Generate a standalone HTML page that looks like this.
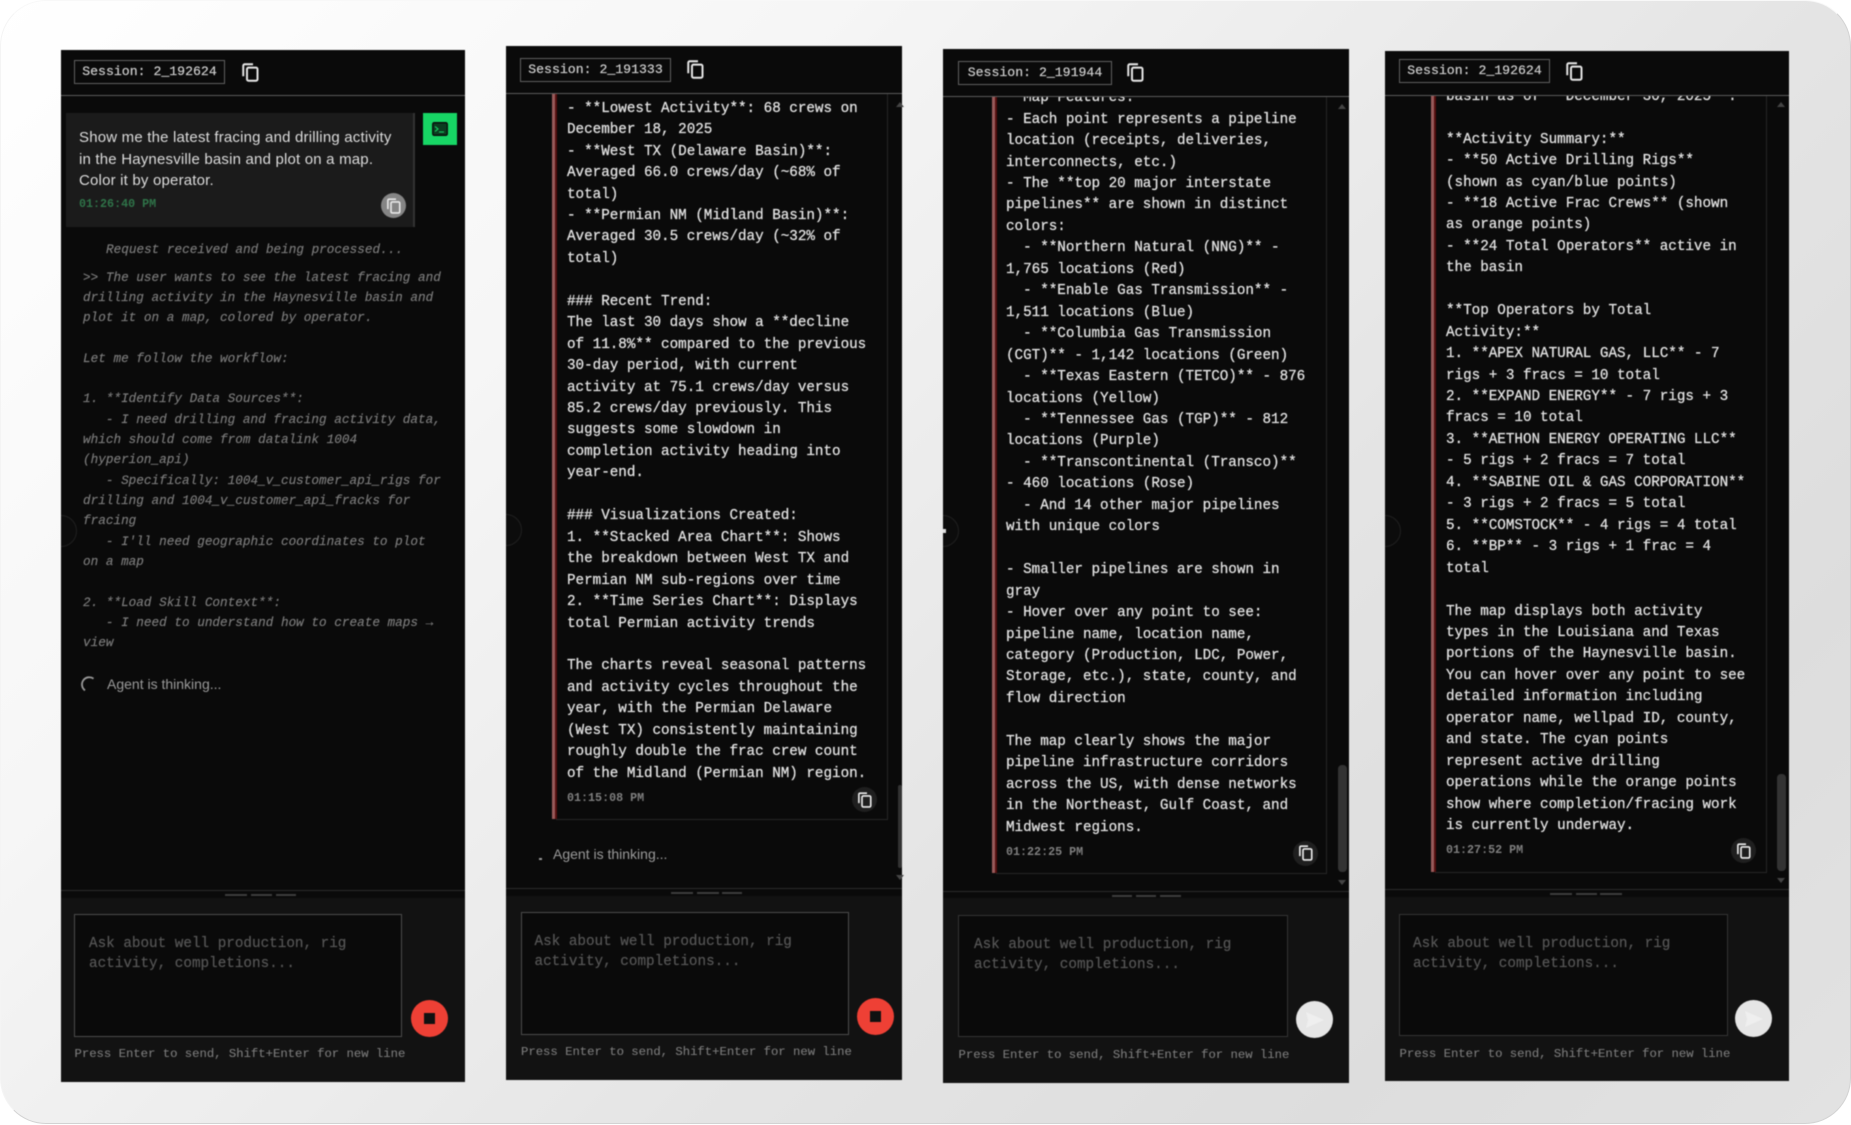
<!DOCTYPE html>
<html><head><meta charset="utf-8"><title>Sessions</title>
<style>
html,body{margin:0;padding:0;width:1851px;height:1125px;overflow:hidden;background:#fff}
*{box-sizing:border-box}
.card{position:absolute;left:0;top:0;width:1851px;height:1124px;border-radius:46px;background:linear-gradient(135deg,#fff 0%,#f6f6f6 28%,#e4e4e4 62%,#dddddd 82%,#e2e2e2 100%);border:1px solid #d2d2d2;border-top-color:#f8f8f8;border-left-color:#f4f4f4}
.a{position:absolute}
.wrap{position:absolute;left:0;top:0;width:1851px;height:1125px;filter:blur(.4px)}
.panel{position:absolute;background:#0a0a0a;overflow:hidden}
.foot{position:absolute;background:#121212}
.hdr{position:absolute;background:#0a0a0a;border-bottom:1px solid #5a5a5a}
.sess{position:absolute;height:24px;border:1px solid #5f5f5f;font:13.2px/22px "Liberation Mono",monospace;color:#cfcfcf;text-align:center;white-space:pre;background:#0a0a0a;-webkit-text-stroke:.2px #cfcfcf}
pre{margin:0;position:absolute;font-family:"Liberation Mono",monospace;white-space:pre}
.msg{font-size:14.3px;line-height:21.46px;color:#e2e2e2;letter-spacing:-.03px;-webkit-text-stroke:.25px #e2e2e2}
.think{font-size:12.7px;line-height:20.32px;color:#7c7c7c;font-style:italic;-webkit-text-stroke:.15px #7c7c7c}
.time{position:absolute;font:bold 11.7px/14px "Liberation Mono",monospace;color:#7f7f7f;white-space:pre}
.agent{position:absolute;font:14px/18px "Liberation Sans",sans-serif;color:#9a9a9a;white-space:pre}
.ta{position:absolute;background:#0a0a0a;border:1px solid #4c4c4c}
.ta.dim{border-color:#333}
.ph{font-size:14.3px;line-height:20px;color:#565656;-webkit-text-stroke:.2px #565656}
.hint{position:absolute;font:12.25px/16px "Liberation Mono",monospace;color:#7a7a7a;white-space:pre;-webkit-text-stroke:.12px #7a7a7a}
.dash{position:absolute;height:2px;background:#3c3c3c}
.div{position:absolute;height:1px;background:#2a2a2a}
.box{position:absolute;border:1px solid #262626;border-left:0;border-top:0}
.red{position:absolute;width:4.5px;background:linear-gradient(90deg,#985a5a 0,#985a5a 60%,#560e0e 60%,#560e0e 100%)}
.cbtn{position:absolute;width:25px;height:25px;border-radius:50%;background:#1f1f1f}
.stop{position:absolute;width:37px;height:37px;border-radius:50%;background:#ee4035}
.stop i{position:absolute;left:13px;top:13px;width:11px;height:11px;background:#111;display:block}
.send{position:absolute;width:37px;height:37px;border-radius:50%;background:#e6e6e6}
.thumb{position:absolute;background:#333;border-radius:4px}
.up{position:absolute;width:0;height:0;border-left:4px solid transparent;border-right:4px solid transparent;border-bottom:5px solid #444}
.dn{position:absolute;width:0;height:0;border-left:4px solid transparent;border-right:4px solid transparent;border-top:5px solid #444}
.tog{position:absolute;width:32px;height:32px;border-radius:50%;border:1px solid #202020;background:#0c0c0c;clip-path:inset(0 0 0 16px)}
</style></head><body>
<svg width="0" height="0" style="position:absolute"><defs>
<symbol id="cp" viewBox="0 0 24 25"><path d="M3 17.5V3.5A2 2 0 0 1 5 1.5H16" fill="none" stroke="currentColor" stroke-width="2.6"/><rect x="8" y="6" width="14" height="17.5" rx="2" fill="none" stroke="currentColor" stroke-width="2.6"/></symbol>
</defs></svg>
<div class="card"></div>
<div class="wrap">

<!-- PANEL 1 -->
<div class="panel" style="left:61px;top:50px;width:404px;height:1032px"></div>
<div class="tog" style="left:45px;top:515px"></div>
<div class="hdr" style="left:61px;top:50px;width:404px;height:46px"></div>
<div class="sess" style="left:74px;top:60px;width:151px">Session: 2_192624</div>
<svg class="a" style="left:241px;top:63px;color:#e8e8e8" width="18" height="19"><use href="#cp"/></svg>
<div class="a" style="left:66px;top:113px;width:349px;height:114px;background:#1b1b1b;border-right:2px solid #333"></div>
<div class="a" style="left:79px;top:127px;font:15px/21.5px 'Liberation Sans',sans-serif;letter-spacing:.19px;color:#dcdcdc;white-space:pre">Show me the latest fracing and drilling activity
in the Haynesville basin and plot on a map.
Color it by operator.</div>
<div class="time" style="left:79px;top:197px;color:#2f7449">01:26:40 PM</div>
<div class="a" style="left:381px;top:193px;width:25px;height:25px;border-radius:50%;background:#858585"></div>
<svg class="a" style="left:385.5px;top:197.5px;color:#e8e8e8" width="15" height="16"><use href="#cp"/></svg>
<div class="a" style="left:423px;top:113px;width:34px;height:32px;background:#17d665"></div>
<svg class="a" style="left:432px;top:122px" width="16" height="14" viewBox="0 0 16 14"><rect x=".7" y=".7" width="14.6" height="12.6" rx="1.5" fill="#0b3d20" stroke="#0a0a0a" stroke-width="1.3"/><path d="M3 4.5L6 7L3 9.5M7 10H12" fill="none" stroke="#17d665" stroke-width="1.1"/></svg>
<pre class="think" style="left:106px;top:240px">Request received and being processed...</pre>
<pre class="think" style="left:83px;top:267.5px">&gt;&gt; The user wants to see the latest fracing and
drilling activity in the Haynesville basin and
plot it on a map, colored by operator.

Let me follow the workflow:

1. **Identify Data Sources**:
   - I need drilling and fracing activity data,
which should come from datalink 1004
(hyperion_api)
   - Specifically: 1004_v_customer_api_rigs for
drilling and 1004_v_customer_api_fracks for
fracing
   - I'll need geographic coordinates to plot
on a map

2. **Load Skill Context**:
   - I need to understand how to create maps →
view</pre>
<svg class="a" style="left:79px;top:675px" width="18" height="18" viewBox="0 0 18 18"><path d="M14.5 3.6A7 7 0 0 0 6 15.4" fill="none" stroke="#9a9a9a" stroke-width="1.8"/></svg>
<div class="agent" style="left:107px;top:675px">Agent is thinking...</div>
<div class="foot" style="left:61px;top:898px;width:404px;height:184px"></div>
<div class="div" style="left:61px;top:890px;width:404px"></div>
<div class="dash" style="left:225px;top:894px;width:22px"></div><div class="dash" style="left:251px;top:894px;width:21px"></div><div class="dash" style="left:276px;top:894px;width:20px"></div>
<div class="ta" style="left:74px;top:914px;width:328px;height:123px"></div>
<pre class="ph" style="left:89px;top:934px">Ask about well production, rig
activity, completions...</pre>
<div class="stop" style="left:411px;top:1000px"><i></i></div>
<div class="hint" style="left:74.5px;top:1046px">Press Enter to send, Shift+Enter for new line</div>

<!-- PANEL 2 -->
<div class="panel" style="left:506px;top:46px;width:396px;height:1034px"></div>
<div class="tog" style="left:490px;top:514px"></div>
<pre class="msg" style="left:567px;top:98.7px">- **Lowest Activity**: 68 crews on
December 18, 2025
- **West TX (Delaware Basin)**:
Averaged 66.0 crews/day (~68% of
total)
- **Permian NM (Midland Basin)**:
Averaged 30.5 crews/day (~32% of
total)

### Recent Trend:
The last 30 days show a **decline
of 11.8%** compared to the previous
30-day period, with current
activity at 75.1 crews/day versus
85.2 crews/day previously. This
suggests some slowdown in
completion activity heading into
year-end.

### Visualizations Created:
1. **Stacked Area Chart**: Shows
the breakdown between West TX and
Permian NM sub-regions over time
2. **Time Series Chart**: Displays
total Permian activity trends

The charts reveal seasonal patterns
and activity cycles throughout the
year, with the Permian Delaware
(West TX) consistently maintaining
roughly double the frac crew count
of the Midland (Permian NM) region.</pre>
<div class="hdr" style="left:506px;top:46px;width:396px;height:48px"></div>
<div class="sess" style="left:520px;top:58px;width:151px">Session: 2_191333</div>
<svg class="a" style="left:686px;top:60px;color:#e8e8e8" width="18" height="19"><use href="#cp"/></svg>
<div class="red" style="left:552px;top:94px;height:725px"></div>
<div class="box" style="left:556px;top:94px;width:332px;height:726px"></div>
<div class="time" style="left:567px;top:790.5px">01:15:08 PM</div>
<div class="cbtn" style="left:852px;top:787px"></div>
<svg class="a" style="left:856.5px;top:791.5px;color:#eee" width="15" height="16"><use href="#cp"/></svg>
<div class="up" style="left:896px;top:102px"></div>
<div class="thumb" style="left:898px;top:785px;width:4px;height:83px"></div>
<div class="dn" style="left:896px;top:875px"></div>
<div class="a" style="left:539px;top:858px;width:3px;height:2px;background:#999"></div>
<div class="agent" style="left:553px;top:845px">Agent is thinking...</div>
<div class="foot" style="left:506px;top:896px;width:396px;height:184px"></div>
<div class="div" style="left:506px;top:888px;width:396px"></div>
<div class="dash" style="left:671px;top:892px;width:22px"></div><div class="dash" style="left:697px;top:892px;width:22px"></div><div class="dash" style="left:722px;top:892px;width:20px"></div>
<div class="ta" style="left:521px;top:912px;width:328px;height:123px"></div>
<pre class="ph" style="left:534.5px;top:932px">Ask about well production, rig
activity, completions...</pre>
<div class="stop" style="left:856.5px;top:998px"><i></i></div>
<div class="hint" style="left:521px;top:1044px">Press Enter to send, Shift+Enter for new line</div>

<!-- PANEL 3 -->
<div class="panel" style="left:943px;top:49px;width:406px;height:1034px"></div>
<div class="tog" style="left:927px;top:515px"></div>
<div class="a" style="left:943px;top:529px;width:3px;height:4px;background:#ddd"></div>
<pre class="msg" style="left:1006px;top:88.2px">**Map Features:**
- Each point represents a pipeline
location (receipts, deliveries,
interconnects, etc.)
- The **top 20 major interstate
pipelines** are shown in distinct
colors:
  - **Northern Natural (NNG)** -
1,765 locations (Red)
  - **Enable Gas Transmission** -
1,511 locations (Blue)
  - **Columbia Gas Transmission
(CGT)** - 1,142 locations (Green)
  - **Texas Eastern (TETCO)** - 876
locations (Yellow)
  - **Tennessee Gas (TGP)** - 812
locations (Purple)
  - **Transcontinental (Transco)**
- 460 locations (Rose)
  - And 14 other major pipelines
with unique colors

- Smaller pipelines are shown in
gray
- Hover over any point to see:
pipeline name, location name,
category (Production, LDC, Power,
Storage, etc.), state, county, and
flow direction

The map clearly shows the major
pipeline infrastructure corridors
across the US, with dense networks
in the Northeast, Gulf Coast, and
Midwest regions.</pre>
<div class="hdr" style="left:943px;top:49px;width:406px;height:48px"></div>
<div class="sess" style="left:958px;top:61px;width:154px">Session: 2_191944</div>
<svg class="a" style="left:1126px;top:63px;color:#e8e8e8" width="18" height="19"><use href="#cp"/></svg>
<div class="red" style="left:992px;top:97px;height:776px"></div>
<div class="box" style="left:996px;top:97px;width:331px;height:777px"></div>
<div class="time" style="left:1006px;top:844.5px">01:22:25 PM</div>
<div class="cbtn" style="left:1293px;top:841px"></div>
<svg class="a" style="left:1297.5px;top:845px;color:#eee" width="15" height="16"><use href="#cp"/></svg>
<div class="up" style="left:1338px;top:104px"></div>
<div class="thumb" style="left:1338px;top:765px;width:9px;height:107px"></div>
<div class="dn" style="left:1338px;top:880px"></div>
<div class="foot" style="left:943px;top:898px;width:406px;height:185px"></div>
<div class="div" style="left:943px;top:891px;width:406px"></div>
<div class="dash" style="left:1112px;top:895px;width:20px"></div><div class="dash" style="left:1136px;top:895px;width:20px"></div><div class="dash" style="left:1160px;top:895px;width:21px"></div>
<div class="ta dim" style="left:958px;top:915px;width:330px;height:122px"></div>
<pre class="ph" style="left:974px;top:935px">Ask about well production, rig
activity, completions...</pre>
<div class="send" style="left:1296px;top:1001px"></div>
<svg class="a" style="left:1305px;top:1011px" width="20" height="18" viewBox="0 0 20 18"><path d="M1 1L19 9L1 17L3 9Z" fill="#efefef"/></svg>
<div class="hint" style="left:958.5px;top:1047px">Press Enter to send, Shift+Enter for new line</div>

<!-- PANEL 4 -->
<div class="panel" style="left:1385px;top:51px;width:404px;height:1030px"></div>
<div class="tog" style="left:1369px;top:515px"></div>
<pre class="msg" style="left:1446px;top:86.7px">basin as of **December 30, 2025**.

**Activity Summary:**
- **50 Active Drilling Rigs**
(shown as cyan/blue points)
- **18 Active Frac Crews** (shown
as orange points)
- **24 Total Operators** active in
the basin

**Top Operators by Total
Activity:**
1. **APEX NATURAL GAS, LLC** - 7
rigs + 3 fracs = 10 total
2. **EXPAND ENERGY** - 7 rigs + 3
fracs = 10 total
3. **AETHON ENERGY OPERATING LLC**
- 5 rigs + 2 fracs = 7 total
4. **SABINE OIL &amp; GAS CORPORATION**
- 3 rigs + 2 fracs = 5 total
5. **COMSTOCK** - 4 rigs = 4 total
6. **BP** - 3 rigs + 1 frac = 4
total

The map displays both activity
types in the Louisiana and Texas
portions of the Haynesville basin.
You can hover over any point to see
detailed information including
operator name, wellpad ID, county,
and state. The cyan points
represent active drilling
operations while the orange points
show where completion/fracing work
is currently underway.</pre>
<div class="hdr" style="left:1385px;top:51px;width:404px;height:45px"></div>
<div class="sess" style="left:1399px;top:59px;width:151px">Session: 2_192624</div>
<svg class="a" style="left:1565px;top:62px;color:#e8e8e8" width="18" height="19"><use href="#cp"/></svg>
<div class="red" style="left:1431px;top:96px;height:776px"></div>
<div class="box" style="left:1435px;top:96px;width:332px;height:777px"></div>
<div class="time" style="left:1446px;top:842.5px">01:27:52 PM</div>
<div class="cbtn" style="left:1731px;top:838px"></div>
<svg class="a" style="left:1735.5px;top:842.5px;color:#eee" width="15" height="16"><use href="#cp"/></svg>
<div class="up" style="left:1777px;top:102px"></div>
<div class="thumb" style="left:1777px;top:774px;width:9px;height:97px"></div>
<div class="dn" style="left:1777px;top:878px"></div>
<div class="foot" style="left:1385px;top:897px;width:404px;height:184px"></div>
<div class="div" style="left:1385px;top:889px;width:404px"></div>
<div class="dash" style="left:1550px;top:893px;width:22px"></div><div class="dash" style="left:1576px;top:893px;width:21px"></div><div class="dash" style="left:1600px;top:893px;width:22px"></div>
<div class="ta dim" style="left:1399px;top:914px;width:329px;height:122px"></div>
<pre class="ph" style="left:1413px;top:934px">Ask about well production, rig
activity, completions...</pre>
<div class="send" style="left:1735px;top:1000px"></div>
<svg class="a" style="left:1744px;top:1010px" width="20" height="18" viewBox="0 0 20 18"><path d="M1 1L19 9L1 17L3 9Z" fill="#efefef"/></svg>
<div class="hint" style="left:1399.5px;top:1046px">Press Enter to send, Shift+Enter for new line</div>

</div>
</body></html>
